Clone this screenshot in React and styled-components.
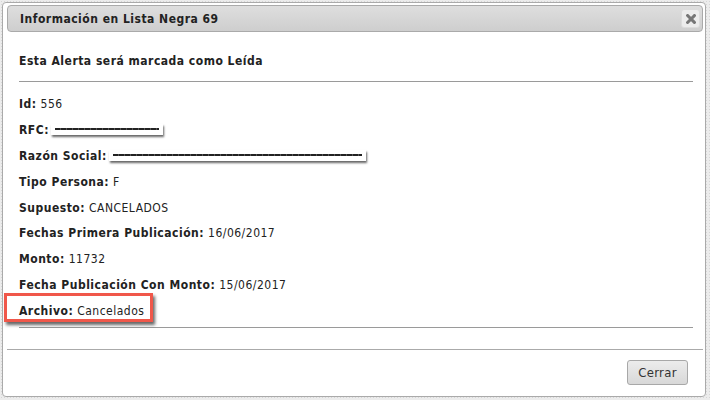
import React from 'react';
import styled, { createGlobalStyle } from 'styled-components';

const colors = {
  border: '#aaaaaa',
  text: '#222222',
  rule: '#9a9a9a',
  mark: '#f0574a'
};

const GlobalStyle = createGlobalStyle`
  html, body {
    margin: 0;
    padding: 0;
    width: 710px;
    height: 400px;
    overflow: hidden;
    background-color: #ececec;
    background-image: radial-gradient(#d6d6d6 0.6px, transparent 0.7px);
    background-size: 3px 3px;
  }
  body {
    font-family: "DejaVu Sans Condensed", "DejaVu Sans", sans-serif;
    font-size: 12px;
    letter-spacing: 0.5px;
    color: ${colors.text};
  }
`;

const Dialog = styled.div`
  box-sizing: border-box;
  margin: 2px 4px 0 2px;
  width: 704px;
  height: 395px;
  background: #ffffff;
  border: 1px solid ${colors.border};
  border-radius: 4px;
  padding: 2px 2px 0 4px;
  display: flex;
  flex-direction: column;
`;

const TitleBar = styled.div`
  box-sizing: border-box;
  height: 27px;
  display: flex;
  align-items: center;
  justify-content: space-between;
  padding: 0 2px 0 12px;
  border: 1px solid ${colors.border};
  border-radius: 4px;
  background: linear-gradient(#dedede, #cecece);
`;

const Title = styled.span`
  font-weight: bold;
  font-size: 12px;
  color: #222;
`;

const CloseButton = styled.button`
  box-sizing: border-box;
  width: 19px;
  height: 19px;
  padding: 0;
  display: flex;
  align-items: center;
  justify-content: center;
  border: 1px solid #dcdcdc;
  border-radius: 3px;
  background: #ececec;
`;

const Content = styled.div`
  flex: 1;
  padding: 21px 10px 0 12px;
`;

const Heading = styled.div`
  font-weight: bold;
  line-height: 16px;
`;

const Rule = styled.div`
  height: 1px;
  background: ${colors.rule};
  margin: ${(p) => p.$margin};
`;

const Rows = styled.div`
  display: flex;
  flex-direction: column;
  gap: 9.9px;
`;

const Row = styled.div`
  position: relative;
  line-height: 16px;
  height: 16px;
  white-space: nowrap;

  b {
    font-weight: bold;
  }
`;

const Marked = styled(Row)`
  &::after {
    content: '';
    position: absolute;
    left: -15px;
    top: -10px;
    width: 143px;
    height: 23px;
    border: 3px solid ${colors.mark};
    box-shadow: 2px 3px 3px rgba(0, 0, 0, 0.6);
  }
`;

const Redacted = styled.span`
  display: inline-block;
  vertical-align: middle;
  box-sizing: border-box;
  width: ${(p) => p.$w}px;
  height: 11px;
  margin-left: -2px;
  padding: 4px 4px 0 4px;
  background: #fff;
  box-shadow: 1px 2px 2px rgba(0, 0, 0, 0.6);
  position: relative;
  top: -1px;

  &::before {
    content: '';
    display: block;
    height: 2px;
    background: repeating-linear-gradient(90deg, #222 0 5px, #555 5px 6px);
  }
`;

const Footer = styled.div`
  height: 47px;
  border-top: 1px solid ${colors.border};
  display: flex;
  align-items: flex-start;
  justify-content: flex-end;
  padding: 10px 15px 0 0;
  box-sizing: border-box;
`;

const Button = styled.button`
  box-sizing: border-box;
  width: 61px;
  height: 25px;
  padding: 0;
  border: 1px solid #a8a8a8;
  border-radius: 3px;
  background: linear-gradient(#ececec, #d8d8d8);
  font-family: "DejaVu Sans Condensed", "DejaVu Sans", sans-serif;
  font-size: 13px;
  letter-spacing: 0.3px;
  color: #333;
`;

const data = [
  ['Id', '556'],
  ['RFC', null, 112],
  ['Razón Social', null, 257],
  ['Tipo Persona', 'F'],
  ['Supuesto', 'CANCELADOS'],
  ['Fechas Primera Publicación', '16/06/2017'],
  ['Monto', '11732'],
  ['Fecha Publicación Con Monto', '15/06/2017']
];

const App = () => {
  return (
    <>
      <GlobalStyle />
      <Dialog>
        <TitleBar>
          <Title>Información en Lista Negra 69</Title>
          <CloseButton aria-label="close">
            <svg width="10" height="10" viewBox="0 0 10 10">
              <path d="M1.6 1.6 L8.4 8.4 M8.4 1.6 L1.6 8.4" stroke="#767676" strokeWidth="3" strokeLinecap="square" />
            </svg>
          </CloseButton>
        </TitleBar>
        <Content>
          <Heading>Esta Alerta será marcada como Leída</Heading>
          <Rule $margin="12px 0 14px" />
          <Rows>
            {data.map(([label, value, w]) => (
              <Row key={label}>
                <b>{label}:</b> {value !== null ? value : <Redacted $w={w} />}
              </Row>
            ))}
            <Marked>
              <b>Archivo:</b> Cancelados
            </Marked>
          </Rows>
          <Rule $margin="8px 0 0" />
        </Content>
        <Footer>
          <Button>Cerrar</Button>
        </Footer>
      </Dialog>
    </>
  );
};

export default App;
